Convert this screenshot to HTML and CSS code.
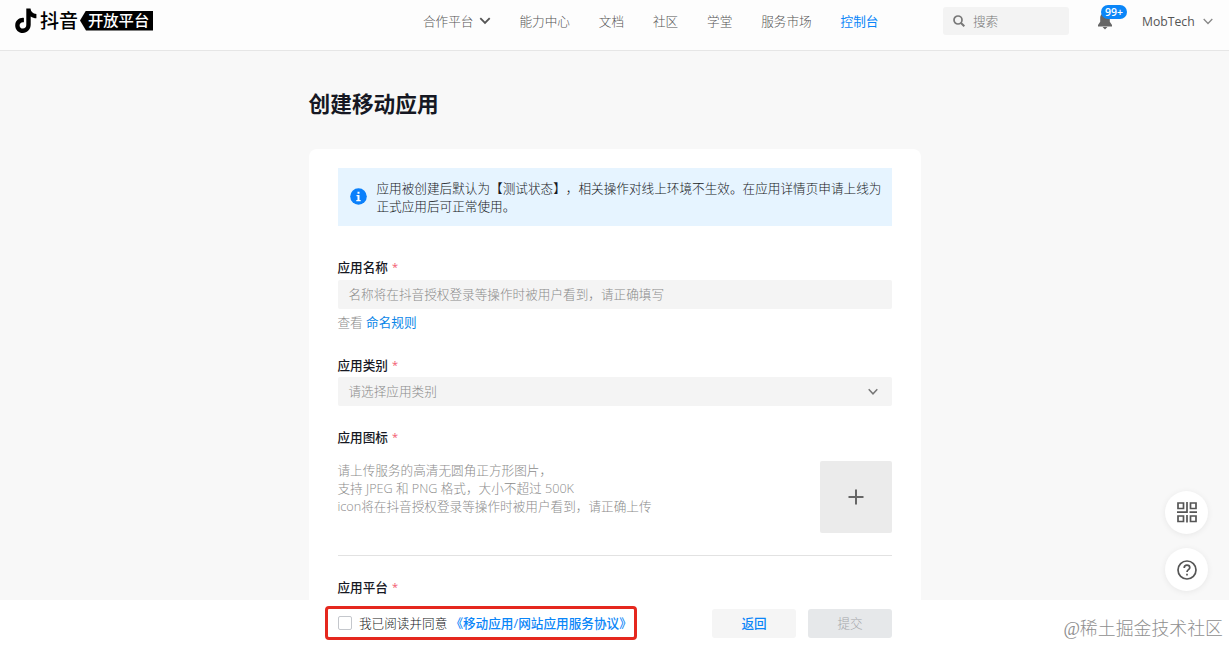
FILE: index.html
```html
<!DOCTYPE html>
<html lang="zh-CN">
<head>
    <meta charset="UTF-8">
    <title>创建移动应用</title>
    <link rel="stylesheet" href="styles.css">
</head>
<body>
    <div class="header">
        <div class="logo">
            <svg class="logo-icon" width="22" height="26" viewBox="0 0 22 26">
                <path d="M11.3 .5h4.2c.3 3.2 2.3 5.1 5.9 5.5v4.3c-2.2 0-4-.6-5.7-1.8v8.1c0 5-3.6 8.400-7.800 8.400C3.600 25 .2 21.600.2 17.400c0-4.600 3.800-8 8.700-7.500v4.400c-2.500-.5-4.300.9-4.300 3.100 0 1.800 1.400 3.200 3.300 3.200 2.100 0 3.400-1.400 3.400-3.600z" fill="#000"/>
            </svg>
            <span class="logo-name">抖音</span>
            <span class="logo-tag">开放平台</span>
        </div>
        <div class="nav">
            <a class="nav-item">合作平台
                <svg width="12" height="8" viewBox="0 0 12 8"><path d="M1.300 1.200L6 6l4.700-4.800" fill="none" stroke="#555" stroke-width="1.800"/></svg>
            </a>
            <a class="nav-item">能力中心</a>
            <a class="nav-item">文档</a>
            <a class="nav-item">社区</a>
            <a class="nav-item">学堂</a>
            <a class="nav-item">服务市场</a>
            <a class="nav-item active">控制台</a>
        </div>
        <div class="search">
            <svg width="12" height="12" viewBox="0 0 12 12"><circle cx="5" cy="5" r="4" fill="none" stroke="#777" stroke-width="1.700"/><path d="M8 8l3.300 3.300" stroke="#777" stroke-width="2"/></svg>
            <span>搜索</span>
        </div>
        <div class="message">
            <svg width="16" height="18" viewBox="0 0 16 18"><path d="M8 1c3 0 4.800 2.200 4.800 5v3.800L15 13v1.500H1V13l2.200-3.200V6C3.200 3.200 5 1 8 1zM5.600 15h4.800L8 17.500z" fill="#666"/></svg>
            <span class="badge">99+</span>
        </div>
        <div class="user">
            <span>MobTech</span>
            <svg width="10" height="7" viewBox="0 0 10 7"><path d="M.7 1L5 5.500 9.300 1" fill="none" stroke="#888" stroke-width="1.300"/></svg>
        </div>
    </div>

    <div class="main">
        <h1 class="title">创建移动应用</h1>
        <div class="card">
            <div class="alert">
                <svg class="alert-icon" width="17" height="17" viewBox="0 0 17 17"><circle cx="8.500" cy="8.500" r="8.300" fill="#0b80fb"/><path d="M7.500 3.700h2v2h-2zM6.500 7h3v5h1.200v1.200H6.300V12h1.200V8.200h-1z" fill="#fff"/></svg>
                <p class="alert-text">应用被创建后默认为【测试状态】，相关操作对线上环境不生效。在应用详情页申请上线为正式应用后可正常使用。</p>
            </div>

            <div class="form-item name-item">
                <div class="label">应用名称<span class="required">*</span></div>
                <div class="input">名称将在抖音授权登录等操作时被用户看到，请正确填写</div>
                <div class="tip">查看 <a class="link">命名规则</a></div>
            </div>

            <div class="form-item type-item">
                <div class="label">应用类别<span class="required">*</span></div>
                <div class="input select">
                    <span>请选择应用类别</span>
                    <svg width="10" height="8" viewBox="0 0 10 8"><path d="M.7 1.200L5 5.800l4.300-4.600" fill="none" stroke="#777" stroke-width="1.500"/></svg>
                </div>
            </div>

            <div class="form-item icon-item">
                <div class="label">应用图标<span class="required">*</span></div>
                <div class="upload-row">
                    <p class="upload-desc">请上传服务的高清无圆角正方形图片，<br>支持 JPEG 和 PNG 格式，大小不超过 500K<br>icon将在抖音授权登录等操作时被用户看到，请正确上传</p>
                    <div class="upload">
                        <svg width="16" height="16" viewBox="0 0 16 16"><path d="M8 .5v15M.5 8h15" stroke="#666" stroke-width="2"/></svg>
                    </div>
                </div>
            </div>

            <div class="form-item platform-item">
                <div class="label">应用平台<span class="required">*</span></div>
            </div>
        </div>
    </div>

    <div class="footer">
        <div class="agreement">
            <span class="checkbox"></span>
            <span>我已阅读并同意</span>
            <a class="agreement-link">《移动应用/网站应用服务协议》</a>
        </div>
        <button class="btn btn-back">返回</button>
        <button class="btn btn-submit">提交</button>
    </div>

    <!-- 右侧悬浮按钮 -->
    <div class="float-bar">
        <div class="float-btn">
            <svg width="20" height="21" viewBox="0 0 20 21" fill="none" stroke="#555" stroke-width="1.700"><path d="M1 1h5.500v5.500H1zM13.500 1H19v5.500h-5.500zM1 14h5.500v5.500H1zM13.500 14H19v5.500h-5.500zM10 0v10.200H0M12.500 10.200H20M10 13v7.500"/></svg>
        </div>
        <div class="float-btn">
            <svg width="20" height="20" viewBox="0 0 20 20" fill="none" stroke="#555" stroke-width="1.700"><circle cx="10" cy="10" r="9"/><path d="M7.200 8c0-1.800 1.100-2.900 2.800-2.900s2.800 1.100 2.800 2.600c0 2-2.800 2-2.800 4.300M10 13.700v1.800"/></svg>
        </div>
    </div>
    <div class="watermark">@稀土掘金技术社区</div>
</body>
</html>
```

FILE: styles.css
```css
* {
    box-sizing: border-box;
}
body {
    margin: 0;
    width: 1229px;
    height: 645px;
    overflow: hidden;
    position: relative;
    background: #fff;
    color: #161823;
    font-family: 'Open Sans', 'Noto Sans CJK SC', sans-serif;
    font-size: 12.64px;
    font-weight: 300;
    line-height: 18px;
    text-spacing-trim: space-all;
}
p, h1 {
    margin: 0;
}
svg {
    display: block;
    flex-shrink: 0;
}
.header {
    display: flex;
    align-items: center;
    height: 51px;
    padding: 0 16px 9px 15px;
    background: #fdfdfd;
    border-bottom: 1px solid #e6e6e6;
    color: #555;
}
.logo {
    display: flex;
    align-items: center;
    width: 408px;
    color: #000;
    font-weight: 500;
}
.logo-name {
    margin-left: 3px;
    width: 40px;
    font-size: 19px;
}
.logo-tag {
    display: flex;
    align-items: center;
    width: 73px;
    height: 20px;
    padding: 0 0 1px 8px;
    background: #000;
    clip-path: polygon(0 50%, 6px 0, 100% 0, 100% 100%, 6px 100%);
    color: #fff;
    font-size: 15.3px;
}
.nav {
    display: flex;
    gap: 28.9px;
    width: 520px;
    white-space: nowrap;
}
.nav-item {
    display: flex;
    align-items: center;
    gap: 5px;
}
.active {
    color: #0b86f8;
    font-weight: 400;
}
.search {
    display: flex;
    align-items: center;
    gap: 8px;
    width: 126px;
    height: 28px;
    padding-left: 10px;
    background: #f3f3f3;
    border-radius: 3px;
    color: #777;
}
.message {
    position: relative;
    width: 16px;
    margin-left: 28px;
    padding-top: 1px;
}
.badge {
    position: absolute;
    left: 4px;
    top: -6px;
    width: 26px;
    height: 14px;
    border-radius: 7px;
    background: #0b86f8;
    color: #fff;
    font-size: 10.5px;
    font-weight: 600;
    line-height: 14px;
    text-align: center;
}
.user {
    display: flex;
    align-items: center;
    justify-content: space-between;
    width: 71px;
    margin-left: 29px;
    padding-top: 2px;
    font-size: 12.2px;
    font-weight: 400;
}
.main {
    height: 549px;
    overflow: hidden;
    background: #f8f8f8;
}
.title {
    width: 612px;
    margin: 37px auto 30px;
    font-size: 21.7px;
    line-height: 31px;
    font-weight: bold;
}
.card {
    width: 612px;
    height: 600px;
    margin: 0 auto;
    padding: 19px 29px 0;
    background: #fff;
    border-radius: 8px;
}
.alert {
    display: flex;
    align-items: center;
    height: 58px;
    padding: 0 8px 1px 12px;
    background: #e6f4ff;
}
.alert-text {
    flex: 1;
    margin-left: 10px;
}
.label {
    height: 18px;
    font-weight: 500;
}
.required {
    margin-left: 4px;
    color: #f2596f;
    font-size: 11px;
    font-weight: 400;
    line-height: 1;
    vertical-align: 1px;
}
.name-item {
    margin-top: 32px;
}
.input {
    height: 29px;
    margin-top: 4px;
    padding: 0 14px 0 11px;
    background: #f4f4f4;
    border-radius: 2px;
    color: #8b8b8b;
    line-height: 29px;
}
.tip {
    margin-top: 4px;
    color: #8b8b8b;
}
.link {
    color: #0b86e8;
    font-weight: 400;
}
.type-item {
    margin-top: 25px;
}
.select {
    display: flex;
    align-items: center;
    justify-content: space-between;
    margin-top: 3px;
}
.icon-item {
    height: 128px;
    margin-top: 22px;
    border-bottom: 1px solid #e2e2e2;
}
.upload-row {
    display: flex;
    justify-content: space-between;
    margin-top: 15px;
}
.upload-desc {
    color: #8b8b8b;
}
.upload {
    display: flex;
    align-items: center;
    justify-content: center;
    width: 72px;
    height: 72px;
    background: #ebebeb;
    border-radius: 2px;
}
.platform-item {
    margin-top: 22px;
}
.footer {
    display: flex;
    align-items: center;
    height: 45px;
    padding: 1px 0 0 325px;
}
.agreement {
    display: flex;
    align-items: center;
    width: 312px;
    height: 34px;
    margin-right: 75px;
    padding-left: 10px;
    border: 3px solid #e5281e;
    border-radius: 4px;
    white-space: nowrap;
}
.checkbox {
    width: 14px;
    height: 14px;
    margin-right: 7px;
    border: 1px solid #c4c7cc;
    border-radius: 2px;
}
.agreement-link {
    margin-left: 3px;
    color: #0b86f8;
    font-weight: 500;
}
.btn {
    width: 84px;
    height: 29px;
    padding: 0;
    border: none;
    border-radius: 3px;
    font: inherit;
}
.btn-back {
    background: #f5f5f5;
    color: #0b86f8;
    font-weight: 500;
}
.btn-submit {
    margin-left: 12px;
    background: #e6e8ea;
    color: #a5a7aa;
}
.float-bar {
    position: absolute;
    right: 21px;
    top: 491px;
    display: flex;
    flex-direction: column;
    gap: 14px;
}
.float-btn {
    display: flex;
    align-items: center;
    justify-content: center;
    width: 43px;
    height: 43px;
    border-radius: 50%;
    background: #fff;
    box-shadow: 0 1px 6px rgba(0, 0, 0, 0.07);
}
.watermark {
    position: absolute;
    right: 6px;
    bottom: 4px;
    color: #8f8f8f;
    font-family: 'Liberation Serif', 'Noto Sans CJK SC', serif;
    font-size: 17.9px;
    line-height: 24px;
}
```
